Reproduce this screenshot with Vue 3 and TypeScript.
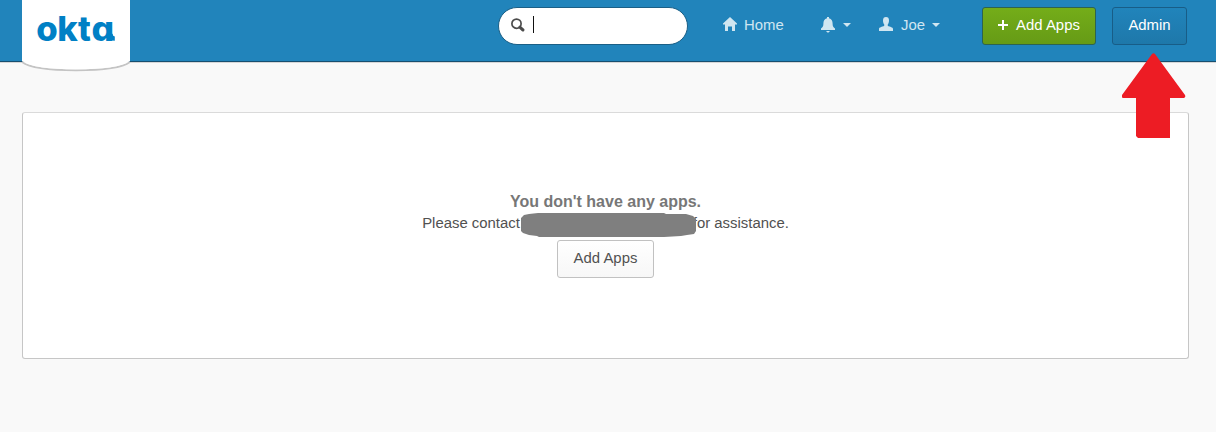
<script setup lang="ts">
import { ref } from 'vue'

const userName = ref('Joe')
const wordmark = [
  { char: 'o', x: 0.3, width: 21.5 },
  { char: 'k', x: 21.3, width: 20.5 },
  { char: 't', x: 42, width: 12.8 },
  { char: 'a', x: 55.6, width: 22.6 },
]
</script>

<template>
  <div class="page">
    <header class="header">
      <div class="brand">
        <svg class="brand-shape" width="112" height="76" viewBox="0 0 112 76">
          <path d="M2 62C10 68 30 70.300 56 70.300S102 68 110 62" fill="none" stroke="#c4c4c4" stroke-width="1.8" />
          <path d="M2 0H110V61C102 67 82 69.300 56 69.300S10 67 2 61Z" fill="#fff" />
        </svg>
        <svg class="wordmark" width="84" height="34" viewBox="0 0 84 34">
          <text v-for="l in wordmark" :key="l.char" :x="l.x" y="28.700" :textLength="l.width" lengthAdjust="spacingAndGlyphs">{{ l.char }}</text>
          <path d="M74.500 22Q74.800 26.600 78.800 26.600" fill="none" stroke="#0080c5" stroke-width="4.200" />
        </svg>
      </div>
      <div class="search">
        <svg width="15" height="15" viewBox="0 0 15 15">
          <circle cx="5.500" cy="5.700" r="4.600" fill="none" stroke="#4b4b4b" stroke-width="1.7" />
          <path d="M8.800 9.200L12 12" stroke="#4b4b4b" stroke-width="3" stroke-linecap="round" />
        </svg>
        <span class="cursor"></span>
      </div>
      <nav class="nav">
        <a class="item home">
          <svg width="14" height="14" viewBox="0 0 14 14"><path d="M7 0L14 6.500V7.500H12V14H9V9.500H5V14H2V7.500H0V6.500Z" /></svg>
          <span>Home</span>
        </a>
        <a class="item bell">
          <svg width="14" height="16" viewBox="0 0 14 16"><path d="M6 0H8V1.3C10.7 2 11.6 4 11.6 6.5C11.6 9 12.2 10 14 11.500V13H0V11.500C1.800 10 2.400 9 2.400 6.500C2.400 4 3.300 2 6 1.300ZM5 14H9L7.600 15.500H6.400Z" /></svg>
          <i class="caret"></i>
        </a>
        <a class="item user">
          <svg width="14" height="14" viewBox="0 0 14 14"><path d="M4 3.500C4 1 5 0 7 0S10 1 10 3.500C10 5.500 9.500 6.500 8.800 7.300V9C11 10 14 10 14 12V14H0V12C0 10 3 10 5.200 9V7.300C4.500 6.500 4 5.500 4 3.500Z" /></svg>
          <span>{{ userName }}</span>
          <i class="caret"></i>
        </a>
      </nav>
      <button class="btn green">
        <svg width="10" height="10" viewBox="0 0 10 10"><path d="M5 0V10M0 5H10" stroke="#fff" stroke-width="2" /></svg>
        <span>Add Apps</span>
      </button>
      <button class="btn admin">Admin</button>
    </header>
    <main class="panel">
      <h2>You don't have any apps.</h2>
      <p>
        <span>Please contact</span>
        <svg class="redaction" width="175" height="24" viewBox="0 0 175 24"><path d="M0 5L3 2L8 1L17 0H143L145 1H165L172 3L175 6V18L173 21L166 22L160 23L143 24H18L16 23L8 22L2 20L0 18Z" fill="#7f7f7f" /></svg>
        <span class="tail">for assistance.</span>
      </p>
      <button class="btn plain">Add Apps</button>
    </main>
    <svg class="arrow" width="64" height="86" viewBox="0 0 64 86"><path d="M30 1Q31.500 -.5 33 1L63 42Q64 44 62 45H48V85H16L14 83V45H1Q-1 44 0 42Z" fill="#ed1c24" /></svg>
  </div>
</template>

<style>
body {
  margin: 0;
  background: #f9f9f9;
}
</style>

<style scoped>
.page {
  position: relative;
  height: 432px;
  overflow: hidden;
  background: #f9f9f9;
  font-family: "Liberation Sans", Arial, sans-serif;
  font-size: 14.9px;
}
.header {
  box-sizing: border-box;
  height: 62px;
  display: flex;
  align-items: flex-start;
  background: #2184bb;
  border-bottom: 1px solid #174f70;
  box-shadow: 0 1px 0 #d7d7d7;
}
.brand {
  position: relative;
  width: 108px;
  height: 61px;
  margin-left: 22px;
}
.brand-shape {
  position: absolute;
  left: -2px;
  top: 0;
}
.wordmark {
  position: absolute;
  left: 14px;
  top: 12px;
  overflow: visible;
}
.wordmark text {
  font-family: Inter, sans-serif;
  font-weight: 800;
  font-size: 34px;
  font-feature-settings: "cv11" 1;
  fill: #0080c5;
}
.search {
  box-sizing: border-box;
  width: 190px;
  height: 38px;
  margin: 7px 0 0 368px;
  padding: 8px 0 0 12px;
  display: flex;
  border: 1px solid #1b5f86;
  border-radius: 19px;
  background: #fff;
}
.search svg {
  margin-top: 2px;
}
.cursor {
  width: 1px;
  height: 17px;
  margin-left: 7px;
  background: #111;
}
.nav {
  display: flex;
  height: 50px;
  color: #d0e6f1;
}
.item {
  display: flex;
  align-items: center;
}
.item svg {
  fill: #d0e6f1;
}
.home {
  width: 62px;
  margin-left: 35px;
  gap: 7px;
}
.home svg {
  position: relative;
  top: -1px;
}
.bell {
  margin-left: 36px;
  gap: 8px;
}
.user {
  margin-left: 28px;
  gap: 8px;
}
.user svg {
  position: relative;
  top: -1px;
}
.user .caret {
  margin-left: -1px;
}
.caret {
  border: 4px solid transparent;
  border-top-color: #d0e6f1;
  border-bottom: 0;
}
.btn {
  box-sizing: border-box;
  height: 38px;
  padding: 0 0 2px;
  display: flex;
  align-items: center;
  justify-content: center;
  border: 1px solid #185d87;
  border-radius: 3px;
  font: inherit;
  color: #fff;
}
.green {
  width: 114px;
  margin: 7px 0 0 auto;
  gap: 8px;
  background: linear-gradient(#74ad19, #669b16);
  border-color: #2d6350;
}
.green svg {
  flex: none;
}
.admin {
  width: 75px;
  margin: 7px 29px 0 16px;
  background: linear-gradient(#2184bb, #1e78aa);
}
.panel {
  box-sizing: border-box;
  width: 1167px;
  height: 247px;
  margin: 50px 0 0 22px;
  padding-top: 78px;
  display: flex;
  flex-direction: column;
  align-items: center;
  background: #fff;
  border: 1px solid #c6c6c6;
  border-top-color: #dadada;
  border-radius: 3px;
  color: #515151;
}
h2 {
  margin: 0;
  font-size: 16px;
  line-height: 21px;
  color: #777;
}
p {
  margin: 0;
  height: 28px;
  display: flex;
  line-height: 22px;
  white-space: nowrap;
}
.redaction {
  position: relative;
  z-index: 1;
  margin: 1px 0 0 1.500px;
}
.tail {
  margin-left: -3.500px;
}
.plain {
  width: 97px;
  background: linear-gradient(#fff, #f7f7f7);
  border-color: #c1c1c1;
  color: #515151;
}
.arrow {
  position: absolute;
  left: 1122px;
  top: 53px;
}
</style>
